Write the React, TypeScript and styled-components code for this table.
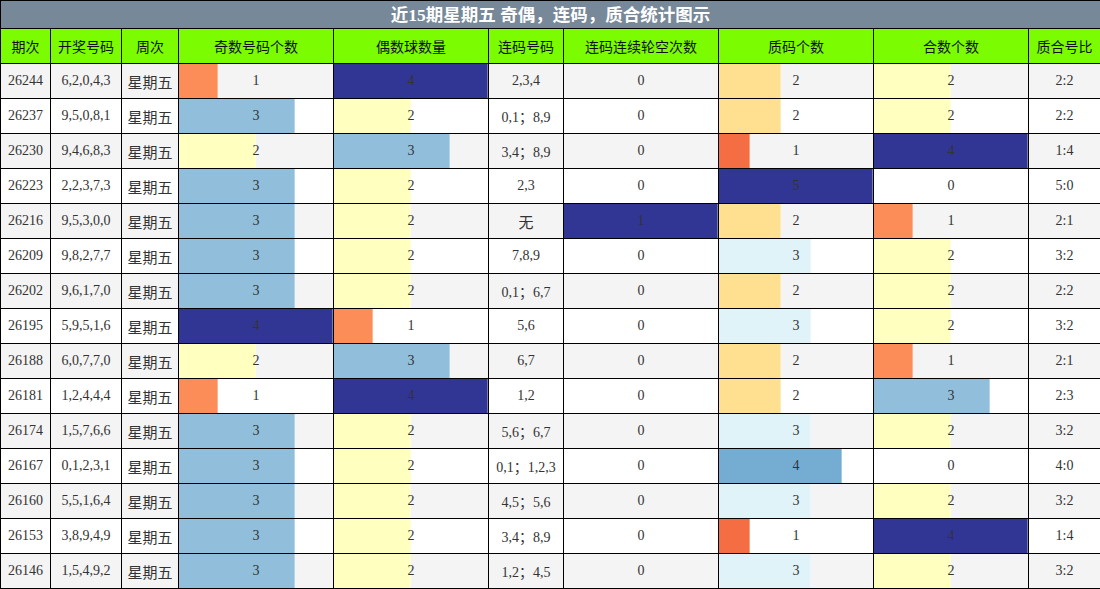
import React from "react";
import styled, { createGlobalStyle } from "styled-components";

const GlobalStyle = createGlobalStyle`
  html, body { margin: 0; padding: 0; background: #ffffff; }
  body { font-family: "Liberation Serif", "Noto Sans CJK SC", serif; }
`;

const Table = styled.table`
  width: 1100px;
  table-layout: fixed;
  border-collapse: collapse;
  border: 1px solid #000;
`;

const TitleCell = styled.th`
  height: 27px;
  padding: 0;
  background: #778899;
  color: #ffffff;
  border: 1px solid #000;
  font-family: "Liberation Serif", "Noto Sans CJK SC", serif;
  font-size: 17.5px;
  font-weight: bold;
  text-align: center;
  line-height: 26px;
`;

const HeadCell = styled.th`
  height: 34px;
  padding: 0;
  background: #7cfc00;
  color: #111;
  border: 1px solid #000;
  font-family: "Noto Sans CJK SC", sans-serif;
  font-size: 14px;
  font-weight: normal;
  text-align: center;
  vertical-align: middle;
`;

const Row = styled.tr<{ $alt: boolean }>`
  background: ${(p) => (p.$alt ? "#f4f4f4" : "#ffffff")};
`;

const Cell = styled.td<{ $cjk?: boolean }>`
  height: 34px;
  padding: 0;
  border: 1px solid #000;
  text-align: center;
  vertical-align: middle;
  color: #333;
  font-family: ${(p) =>
    p.$cjk ? '"Noto Sans CJK SC", sans-serif' : '"Liberation Serif", "Noto Sans CJK SC", serif'};
  font-size: ${(p) => (p.$cjk ? "15px" : "14px")};
`;

const BarCell = styled.td`
  height: 34px;
  padding: 0;
  border: 1px solid #000;
  vertical-align: middle;
`;

const BarWrap = styled.div`
  position: relative;
  height: 34px;
  display: flex;
  align-items: center;
  justify-content: center;
  color: #333;
  font-family: "Liberation Serif", serif;
  font-size: 14px;
`;

const Bar = styled.div<{ $color: string }>`
  position: absolute;
  left: 0;
  top: 0;
  bottom: 0;
  background: ${(p) => p.$color};
  box-shadow: inset -1px 0 0 rgba(255, 255, 255, 0.35);
`;

const BarText = styled.span`
  position: relative;
`;

const C4: Record<number, string> = {
  1: "#fc8d59",
  2: "#ffffbf",
  3: "#91bfdb",
  4: "#313695",
};
const C5: Record<number, string> = {
  1: "#f46d43",
  2: "#fee090",
  3: "#e0f3f8",
  4: "#74add1",
  5: "#313695",
};
const C1: Record<number, string> = { 1: "#313695" };

type R = [string, string, number, number, string, number, number, number, string];

const rows: R[] = [
  ["26244", "6,2,0,4,3", 1, 4, "2,3,4", 0, 2, 2, "2:2"],
  ["26237", "9,5,0,8,1", 3, 2, "0,1；8,9", 0, 2, 2, "2:2"],
  ["26230", "9,4,6,8,3", 2, 3, "3,4；8,9", 0, 1, 4, "1:4"],
  ["26223", "2,2,3,7,3", 3, 2, "2,3", 0, 5, 0, "5:0"],
  ["26216", "9,5,3,0,0", 3, 2, "无", 1, 2, 1, "2:1"],
  ["26209", "9,8,2,7,7", 3, 2, "7,8,9", 0, 3, 2, "3:2"],
  ["26202", "9,6,1,7,0", 3, 2, "0,1；6,7", 0, 2, 2, "2:2"],
  ["26195", "5,9,5,1,6", 4, 1, "5,6", 0, 3, 2, "3:2"],
  ["26188", "6,0,7,7,0", 2, 3, "6,7", 0, 2, 1, "2:1"],
  ["26181", "1,2,4,4,4", 1, 4, "1,2", 0, 2, 3, "2:3"],
  ["26174", "1,5,7,6,6", 3, 2, "5,6；6,7", 0, 3, 2, "3:2"],
  ["26167", "0,1,2,3,1", 3, 2, "0,1；1,2,3", 0, 4, 0, "4:0"],
  ["26160", "5,5,1,6,4", 3, 2, "4,5；5,6", 0, 3, 2, "3:2"],
  ["26153", "3,8,9,4,9", 3, 2, "3,4；8,9", 0, 1, 4, "1:4"],
  ["26146", "1,5,4,9,2", 3, 2, "1,2；4,5", 0, 3, 2, "3:2"],
];

const widths = [50, 71, 57, 155, 155, 75, 155, 155, 155, 72];
const headers = [
  "期次",
  "开奖号码",
  "周次",
  "奇数号码个数",
  "偶数球数量",
  "连码号码",
  "连码连续轮空次数",
  "质码个数",
  "合数个数",
  "质合号比",
];

function BarValue({ v, max, colors }: { v: number; max: number; colors: Record<number, string> }) {
  const pct = (v / max) * 100;
  return (
    <BarCell>
      <BarWrap>
        {v > 0 && <Bar $color={colors[v]} style={{ width: `${pct}%` }} />}
        <BarText>{v}</BarText>
      </BarWrap>
    </BarCell>
  );
}

export default function App() {
  return (
    <>
      <GlobalStyle />
      <Table>
        <colgroup>
          {widths.map((w, i) => (
            <col key={i} style={{ width: w }} />
          ))}
        </colgroup>
        <thead>
          <tr>
            <TitleCell colSpan={10}>近15期星期五 奇偶，连码，质合统计图示</TitleCell>
          </tr>
          <tr>
            {headers.map((h) => (
              <HeadCell key={h}>{h}</HeadCell>
            ))}
          </tr>
        </thead>
        <tbody>
          {rows.map((r, i) => (
            <Row key={r[0]} $alt={i % 2 === 0}>
              <Cell>{r[0]}</Cell>
              <Cell>{r[1]}</Cell>
              <Cell $cjk>星期五</Cell>
              <BarValue v={r[2]} max={4} colors={C4} />
              <BarValue v={r[3]} max={4} colors={C4} />
              <Cell $cjk={r[4] === "无"}>{r[4]}</Cell>
              <BarValue v={r[5]} max={1} colors={C1} />
              <BarValue v={r[6]} max={5} colors={C5} />
              <BarValue v={r[7]} max={4} colors={C4} />
              <Cell>{r[8]}</Cell>
            </Row>
          ))}
        </tbody>
      </Table>
    </>
  );
}
